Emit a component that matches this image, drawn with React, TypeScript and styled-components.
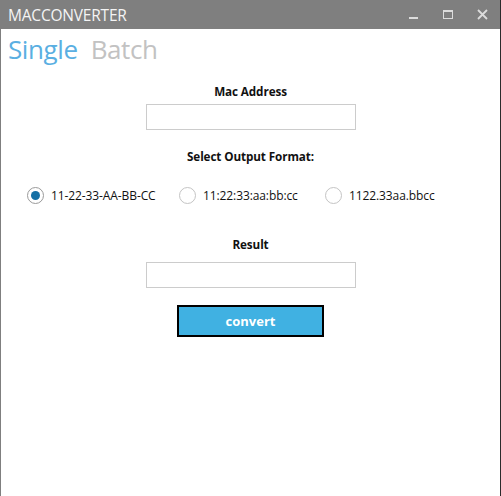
import React, { useState } from "react";
import styled, { createGlobalStyle } from "styled-components";

const Global = createGlobalStyle`
  html, body { margin: 0; padding: 0; background: #ffffff; }
  body { font-family: "Open Sans", "Noto Sans", sans-serif; }
  * { box-sizing: border-box; }
`;

const Window = styled.div`
  width: 501px;
  height: 496px;
  display: flex;
  flex-direction: column;
  background: #ffffff;
  border-left: 1px solid #7f7f7f;
  border-right: 1px solid #7f7f7f;
  position: relative;
  &::after {
    content: "";
    position: absolute;
    top: 0;
    right: -1px;
    width: 1px;
    height: 100%;
    background: #2b2b2b;
  }
`;

const TitleBar = styled.div`
  height: 29px;
  flex: none;
  background: #7f7f7f;
  display: flex;
  align-items: center;
  padding-left: 8px;
  padding-right: 2px;
  margin-left: -1px;
  margin-right: -1px;
`;

const Title = styled.div`
  flex: 1;
  color: #f4f4f4;
  font-size: 15.5px;
  font-weight: 400;
  letter-spacing: -0.2px;
`;

const Controls = styled.div`
  display: flex;
  align-items: center;
  height: 100%;
`;

const Ctl = styled.div`
  width: 34px;
  height: 29px;
  display: flex;
  align-items: center;
  justify-content: center;
`;

const Tabs = styled.div`
  display: flex;
  gap: 13px;
  padding: 4px 0 0 7px;
  height: 40px;
`;

const Tab = styled.div<{ $active?: boolean }>`
  font-size: 26px;
  line-height: 32px;
  color: ${(p) => (p.$active ? "#5aafe2" : "#c2c2c2")};
  letter-spacing: -0.4px;
  cursor: pointer;
`;

const Form = styled.div`
  display: flex;
  flex-direction: column;
  align-items: center;
  padding-top: 14px;
`;

const Label = styled.div<{ $top?: number }>`
  font-size: 11.7px;
  font-weight: 700;
  color: #111;
  line-height: 16px;
  letter-spacing: -0.1px;
  margin-top: ${(p) => p.$top ?? 0}px;
`;

const Field = styled.input<{ $top: number }>`
  width: 210px;
  height: 26px;
  border: 1px solid #cccccc;
  margin-top: ${(p) => p.$top}px;
  outline: none;
  font-family: inherit;
  font-size: 12px;
  padding: 0 4px;
`;

const RadioRow = styled.div`
  align-self: stretch;
  display: grid;
  grid-template-columns: 152px 146px auto;
  padding-left: 26px;
  margin-top: 21px;
  height: 20px;
  align-items: center;
`;

const RadioItem = styled.label`
  display: flex;
  align-items: center;
  gap: 7px;
  font-size: 12px;
  color: #111;
  letter-spacing: -0.1px;
  cursor: pointer;
`;

const Circle = styled.span<{ $on?: boolean }>`
  width: 17px;
  height: 17px;
  border-radius: 50%;
  border: 1px solid ${(p) => (p.$on ? "#9a9a9a" : "#c4c4c4")};
  background: #fff;
  display: flex;
  align-items: center;
  justify-content: center;
  &::after {
    content: "";
    width: 9px;
    height: 9px;
    border-radius: 50%;
    background: ${(p) => (p.$on ? "#1570a5" : "transparent")};
  }
`;

const Button = styled.button`
  margin-top: 17px;
  width: 147px;
  height: 32px;
  background: #40b1e2;
  border: 2px solid #000;
  color: #fff;
  font-family: inherit;
  font-weight: 700;
  font-size: 13px;
  cursor: pointer;
`;

const formats = ["11-22-33-AA-BB-CC", "11:22:33:aa:bb:cc", "1122.33aa.bbcc"];

export default function App() {
  const [sel, setSel] = useState(0);
  return (
    <>
      <Global />
      <Window>
        <TitleBar>
          <Title>MACCONVERTER</Title>
          <Controls>
            <Ctl>
              <svg width="10" height="10" viewBox="0 0 10 10">
                <rect x="0" y="7" width="9" height="2" fill="#dcdcdc" />
              </svg>
            </Ctl>
            <Ctl>
              <svg width="10" height="10" viewBox="0 0 10 10">
                <rect x="0.5" y="0.5" width="9" height="8" fill="none" stroke="#dcdcdc" />
                <rect x="0" y="0" width="10" height="2" fill="#dcdcdc" />
              </svg>
            </Ctl>
            <Ctl>
              <svg width="11" height="11" viewBox="0 0 11 11">
                <path d="M1 1 L10 10 M10 1 L1 10" stroke="#dcdcdc" strokeWidth="1.8" />
              </svg>
            </Ctl>
          </Controls>
        </TitleBar>
        <Tabs>
          <Tab $active>Single</Tab>
          <Tab>Batch</Tab>
        </Tabs>
        <Form>
          <Label>Mac Address</Label>
          <Field $top={5} />
          <Label $top={18}>Select Output Format:</Label>
          <RadioRow>
            {formats.map((f, i) => (
              <RadioItem key={f} onClick={() => setSel(i)}>
                <Circle $on={sel === i} />
                {f}
              </RadioItem>
            ))}
          </RadioRow>
          <Label $top={31}>Result</Label>
          <Field $top={10} />
          <Button>convert</Button>
        </Form>
      </Window>
    </>
  );
}
